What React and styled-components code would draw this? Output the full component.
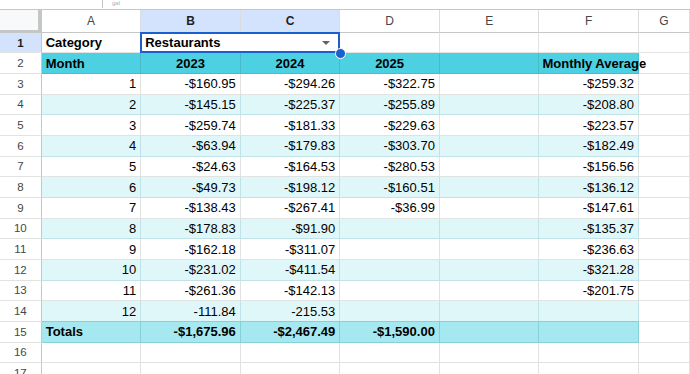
import React from 'react';
import styled, { createGlobalStyle, css } from 'styled-components';

const GlobalStyle = createGlobalStyle`
  html, body {
    margin: 0;
    padding: 0;
    background: #ffffff;
    overflow: hidden;
  }
  body {
    font-family: "Liberation Sans", Arial, sans-serif;
  }
`;

const Page = styled.div`
  width: 690px;
  height: 374px;
  overflow: hidden;
  background: #ffffff;
`;

const TopStrip = styled.div`
  height: 9px;
  border-bottom: 1px solid #c4c7c5;
  display: flex;
  align-items: flex-start;
  padding-left: 102px;
  gap: 9px;
`;

const Tick = styled.div`
  width: 1px;
  height: 8px;
  background: #c4c7c5;
`;

const TinyText = styled.span`
  font-size: 6px;
  line-height: 6px;
  color: #b0b0b0;
`;

const Sheet = styled.div`
  display: grid;
  grid-template-columns: 41.7px repeat(6, 99.55px) 51px;
  grid-template-rows: 22.7px repeat(17, 20.67px);
`;

const Corner = styled.div`
  background: #f8f9fa;
  box-shadow: inset -4px -3px 0 #c4c7c5;
`;

const ColHead = styled.div`
  display: flex;
  align-items: center;
  justify-content: center;
  font-size: 12px;
  color: #444746;
  border-right: 1px solid #dadce0;
  border-bottom: 1px solid #c4c7c5;
  background: ${p => (p.$active ? '#d3e3fd' : '#ffffff')};
  font-weight: ${p => (p.$active ? 700 : 400)};
  ${p => p.$active && css`color: #1f1f1f;`}
`;

const RowHead = styled.div`
  display: flex;
  align-items: center;
  justify-content: center;
  font-size: 11.5px;
  color: #444746;
  border-right: 1px solid #c4c7c5;
  border-bottom: 1px solid #e1e3e1;
  background: ${p => (p.$active ? '#d3e3fd' : '#ffffff')};
  font-weight: ${p => (p.$active ? 700 : 400)};
  ${p => p.$active && css`color: #1f1f1f;`}
`;

const fills = {
  plain: '#ffffff',
  head: '#4dd0e1',
  band: '#e0f7fa',
  total: '#a5e8ef',
};

const lines = {
  plain: '#e1e3e1',
  head: '#46bccb',
  band: '#bfe3e8',
  total: '#86d0da',
};

const Cell = styled.div`
  display: flex;
  align-items: center;
  justify-content: ${p =>
    p.$align === 'right' ? 'flex-end' : p.$align === 'center' ? 'center' : 'flex-start'};
  padding: 0 4px 0 4px;
  font-size: 13px;
  color: #000000;
  white-space: nowrap;
  font-weight: ${p => (p.$bold ? 700 : 400)};
  background: ${p => fills[p.$fill || 'plain']};
  border-right: 1px solid ${p => lines[p.$fill || 'plain']};
  border-bottom: 1px solid ${p => lines[p.$fill || 'plain']};
  ${p => p.$fill === 'total' && css`border-top: 1px solid #86d0da; margin-top: -1px;`}
  ${p => p.$overflow && css`overflow: visible; position: relative; z-index: 1; padding-left: 3px;`}
  min-width: 0;
`;

const Chip = styled.div`
  grid-column: span 2;
  position: relative;
  display: flex;
  align-items: center;
  padding: 0 4px;
  font-size: 13px;
  font-weight: 700;
  color: #000;
  border-bottom: 1px solid #e1e3e1;
  border-right: 1px solid #e1e3e1;
  &::after {
    content: '';
    position: absolute;
    left: -1px;
    top: -1px;
    right: -1px;
    bottom: -1px;
    border: 2px solid #1a5fd0;
    pointer-events: none;
  }
`;

const Arrow = styled.span`
  margin-left: auto;
  margin-right: 5px;
  width: 0;
  height: 0;
  border-left: 4px solid transparent;
  border-right: 4px solid transparent;
  border-top: 4px solid #5f6368;
`;

const Handle = styled.span`
  position: absolute;
  right: -7px;
  bottom: -7px;
  width: 9px;
  height: 9px;
  border-radius: 50%;
  background: #1a5fd0;
  border: 1.5px solid #ffffff;
  z-index: 3;
`;

const cols = ['A', 'B', 'C', 'D', 'E', 'F', 'G'];

const data = [
  ['1', '-$160.95', '-$294.26', '-$322.75', '', '-$259.32'],
  ['2', '-$145.15', '-$225.37', '-$255.89', '', '-$208.80'],
  ['3', '-$259.74', '-$181.33', '-$229.63', '', '-$223.57'],
  ['4', '-$63.94', '-$179.83', '-$303.70', '', '-$182.49'],
  ['5', '-$24.63', '-$164.53', '-$280.53', '', '-$156.56'],
  ['6', '-$49.73', '-$198.12', '-$160.51', '', '-$136.12'],
  ['7', '-$138.43', '-$267.41', '-$36.99', '', '-$147.61'],
  ['8', '-$178.83', '-$91.90', '', '', '-$135.37'],
  ['9', '-$162.18', '-$311.07', '', '', '-$236.63'],
  ['10', '-$231.02', '-$411.54', '', '', '-$321.28'],
  ['11', '-$261.36', '-$142.13', '', '', '-$201.75'],
  ['12', '-111.84', '-215.53', '', '', ''],
];

export default function App() {
  return (
    <Page>
      <GlobalStyle />
      <TopStrip>
        <Tick />
        <TinyText>gal</TinyText>
      </TopStrip>
      <Sheet>
        <Corner />
        {cols.map(c => (
          <ColHead key={c} $active={c === 'B' || c === 'C'}>{c}</ColHead>
        ))}

        <RowHead $active>1</RowHead>
        <Cell $bold>Category</Cell>
        <Chip>
          Restaurants
          <Arrow />
          <Handle />
        </Chip>
        <Cell />
        <Cell />
        <Cell />
        <Cell />

        <RowHead>2</RowHead>
        <Cell $fill="head" $bold>Month</Cell>
        <Cell $fill="head" $bold $align="center">2023</Cell>
        <Cell $fill="head" $bold $align="center">2024</Cell>
        <Cell $fill="head" $bold $align="center">2025</Cell>
        <Cell $fill="head" />
        <Cell $fill="head" $bold $overflow>Monthly Average</Cell>
        <Cell />

        {data.map((row, i) => {
          const fill = i % 2 === 1 ? 'band' : 'plain';
          return (
            <React.Fragment key={i}>
              <RowHead>{i + 3}</RowHead>
              {row.map((v, j) => (
                <Cell key={j} $fill={fill} $align="right">{v}</Cell>
              ))}
              <Cell />
            </React.Fragment>
          );
        })}

        <RowHead>15</RowHead>
        <Cell $fill="total" $bold>Totals</Cell>
        <Cell $fill="total" $bold $align="right">-$1,675.96</Cell>
        <Cell $fill="total" $bold $align="right">-$2,467.49</Cell>
        <Cell $fill="total" $bold $align="right">-$1,590.00</Cell>
        <Cell $fill="total" />
        <Cell $fill="total" />
        <Cell />

        {[16, 17].map(n => (
          <React.Fragment key={n}>
            <RowHead>{n}</RowHead>
            {[0, 1, 2, 3, 4, 5, 6].map(k => <Cell key={k} />)}
          </React.Fragment>
        ))}
      </Sheet>
    </Page>
  );
}
